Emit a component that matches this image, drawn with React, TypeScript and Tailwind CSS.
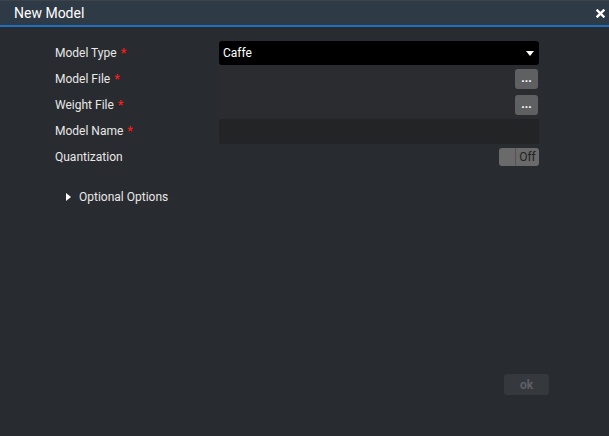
import React, { useState } from 'react';

const Req = () => <span className="ml-1 text-[#ff1a1a] font-bold">*</span>;

const Row: React.FC<{ label: string; required?: boolean; children: React.ReactNode }> = ({ label, required, children }) => (
  <div className="flex items-center h-[26px]">
    <div className="w-[164px] text-[12px] text-[#e8e8e8]">
      {label}
      {required && <Req />}
    </div>
    <div className="w-[320px] h-full flex items-center">{children}</div>
  </div>
);

const BrowseField = () => (
  <div className="w-full h-full bg-[#2a2c2f] flex items-center justify-end pr-[1px]">
    <button className="w-[23px] h-[20px] rounded-[3px] bg-[#5f6062] text-white text-[12px] font-bold leading-none pb-[3px]">...</button>
  </div>
);

export default function App() {
  const [quant, setQuant] = useState(false);
  return (
    <div className="w-[609px] h-[436px] bg-[#282b2f] flex flex-col" style={{ fontFamily: 'Roboto, "Liberation Sans", sans-serif' }}>
      {/* Header */}
      <div className="h-[25px] bg-[#2e3a46] border-t border-[#3d4349] flex items-center justify-between pl-[14px] pr-[4px]">
        <span className="text-[14px] text-white">New Model</span>
        <svg width="9" height="9" viewBox="0 0 9 9">
          <path d="M1.5 1.5 L7.5 7.5 M7.5 1.5 L1.5 7.5" stroke="#fff" strokeWidth="2.4" strokeLinecap="square" />
        </svg>
      </div>
      <div className="h-[2px] bg-[#1f6fbf]" />

      {/* Body */}
      <div className="flex-1 flex flex-col pl-[55px] pt-[13px]">
        <Row label="Model Type" required>
          <div className="w-full h-[24px] bg-black rounded-[3px] flex items-center justify-between pl-[4px] pr-[5px]">
            <span className="text-[12px] text-white">Caffe</span>
            <svg width="8" height="5" viewBox="0 0 8 5">
              <path d="M0 0 L8 0 L4 5 Z" fill="#fff" />
            </svg>
          </div>
        </Row>
        <Row label="Model File" required>
          <BrowseField />
        </Row>
        <Row label="Weight File" required>
          <BrowseField />
        </Row>
        <Row label="Model Name" required>
          <input className="w-full h-[25px] bg-[#232426] rounded-[2px] outline-none text-[12px] text-white px-1" />
        </Row>
        <Row label="Quantization">
          <div className="w-full flex justify-end">
            <button
              onClick={() => setQuant(!quant)}
              className="w-[40px] h-[18px] rounded-[3px] bg-[#6a6a6a] flex items-center overflow-hidden"
            >
              <span className="w-[17px] h-full border-r border-[#555]" />
              <span className="flex-1 text-[12px] text-[#222] leading-none">Off</span>
            </button>
          </div>
        </Row>

        <div className="flex items-center mt-[18px] pl-[11px] gap-[8px]">
          <svg width="5" height="8" viewBox="0 0 5 8">
            <path d="M0 0 L5 4 L0 8 Z" fill="#fff" />
          </svg>
          <span className="text-[12px] text-[#e8e8e8]">Optional Options</span>
        </div>

        <div className="flex-1" />
        <div className="flex justify-end pr-[60px] pb-[41px]">
          <button className="w-[45px] h-[21px] rounded-[3px] bg-[#35383c] text-[12px] font-bold text-[#5d6064]">ok</button>
        </div>
      </div>
    </div>
  );
}
